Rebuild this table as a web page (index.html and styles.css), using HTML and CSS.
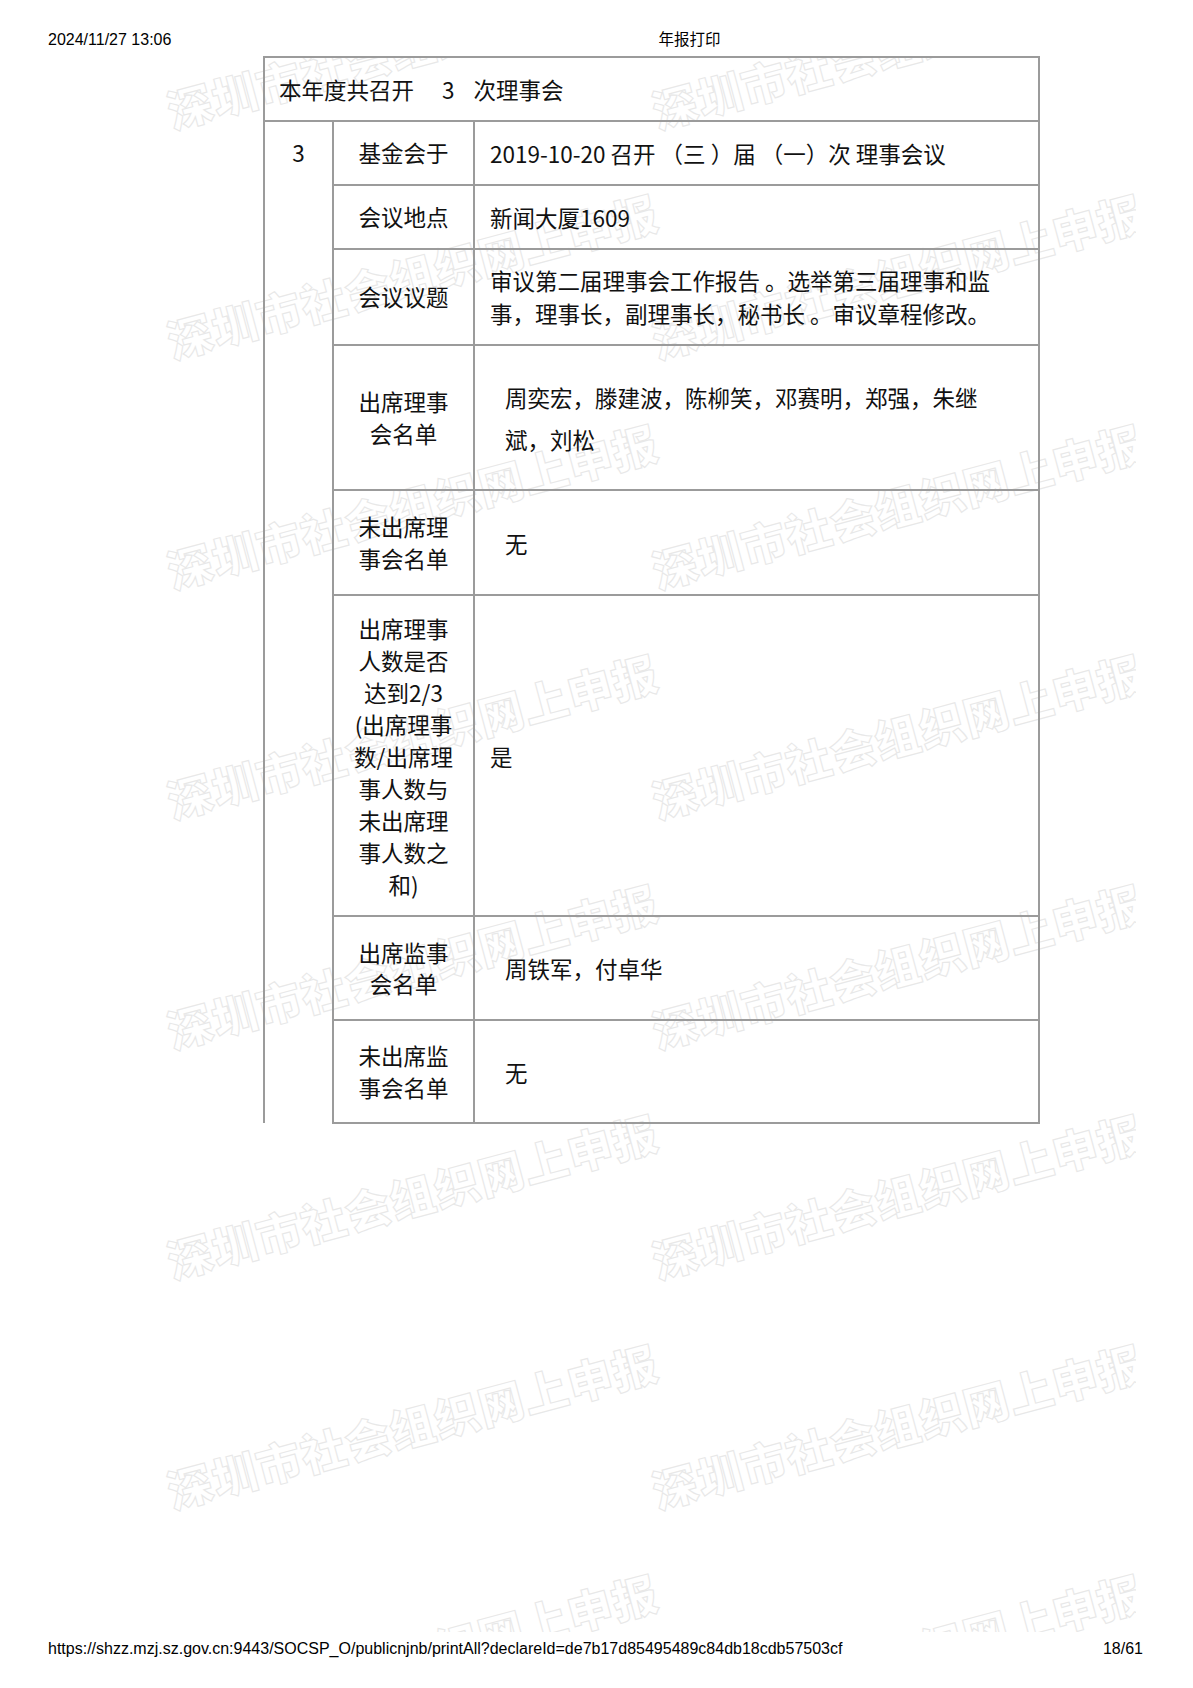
FILE: index.html
```html
<!DOCTYPE html>
<html lang="zh-CN">
<head>
<meta charset="utf-8">
<title>年报打印</title>
<link rel="stylesheet" href="styles.css">
</head>
<body>
<div class="page">
  <div class="watermarks" aria-hidden="true">
    <span class="wm c1 r0">深圳市社会组织网上申报</span>
    <span class="wm c2 r0">深圳市社会组织网上申报</span>
    <span class="wm c1 r1">深圳市社会组织网上申报</span>
    <span class="wm c2 r1">深圳市社会组织网上申报</span>
    <span class="wm c1 r2">深圳市社会组织网上申报</span>
    <span class="wm c2 r2">深圳市社会组织网上申报</span>
    <span class="wm c1 r3">深圳市社会组织网上申报</span>
    <span class="wm c2 r3">深圳市社会组织网上申报</span>
    <span class="wm c1 r4">深圳市社会组织网上申报</span>
    <span class="wm c2 r4">深圳市社会组织网上申报</span>
    <span class="wm c1 r5">深圳市社会组织网上申报</span>
    <span class="wm c2 r5">深圳市社会组织网上申报</span>
    <span class="wm c1 r6">深圳市社会组织网上申报</span>
    <span class="wm c2 r6">深圳市社会组织网上申报</span>
    <span class="wm c1 r7">深圳市社会组织网上申报</span>
    <span class="wm c2 r7">深圳市社会组织网上申报</span>
  </div>

  <header class="print-header">
    <span class="date">2024/11/27 13:06</span>
    <span class="doc-title">年报打印</span>
  </header>

  <main class="content">
    <table class="report">
      <colgroup>
        <col class="col-idx">
        <col class="col-label">
        <col class="col-value">
      </colgroup>
      <tr class="h-64">
        <td colspan="3" class="summary">本年度共召开<span class="count">3</span>次理事会</td>
      </tr>
      <tr class="h-64">
        <td rowspan="8" class="idx">3</td>
        <td class="label">基金会于</td>
        <td class="value">2019-10-20 召开 （三 ）届 （一）次 理事会议</td>
      </tr>
      <tr class="h-64">
        <td class="label">会议地点</td>
        <td class="value">新闻大厦1609</td>
      </tr>
      <tr class="h-96">
        <td class="label">会议议题</td>
        <td class="value topic">审议第二届理事会工作报告 。选举第三届理事和监事，理事长，副理事长，秘书长 。审议章程修改。</td>
      </tr>
      <tr class="h-145">
        <td class="label">出席理事会名单</td>
        <td class="value names">周奕宏，滕建波，陈柳笑，邓赛明，郑强，朱继斌，刘松</td>
      </tr>
      <tr class="h-105">
        <td class="label">未出席理事会名单</td>
        <td class="value indent">无</td>
      </tr>
      <tr class="h-321">
        <td class="label long">出席理事<br>人数是否<br>达到2/3<br>(出席理事<br>数/出席理<br>事人数与<br>未出席理<br>事人数之<br>和)</td>
        <td class="value">是</td>
      </tr>
      <tr class="h-104">
        <td class="label">出席监事会名单</td>
        <td class="value indent">周铁军，付卓华</td>
      </tr>
      <tr class="h-103">
        <td class="label">未出席监事会名单</td>
        <td class="value indent">无</td>
      </tr>
    </table>
  </main>

  <footer class="print-footer">
    <span class="url">https://shzz.mzj.sz.gov.cn:9443/SOCSP_O/publicnjnb/printAll?declareId=de7b17d85495489c84db18cdb57503cf</span>
    <span class="pager">18/61</span>
  </footer>
</div>
</body>
</html>
```

FILE: styles.css
```css
* { box-sizing: border-box; }

html, body {
  margin: 0;
  padding: 0;
  background: #fff;
}

.page {
  position: relative;
  width: 1193px;
  height: 1688px;
  display: flex;
  flex-direction: column;
  overflow: hidden;
  color: #000;
}

/* ---------- watermark layer ---------- */
.watermarks {
  position: absolute;
  left: 0;
  top: 57px;
  width: 1136px;
  height: 1575px;
  overflow: hidden;
  pointer-events: none;
  z-index: 0;
}

.wm {
  position: absolute;
  white-space: nowrap;
  font-family: "Noto Sans CJK SC", sans-serif;
  font-weight: 900;
  font-size: 45px;
  line-height: 1;
  letter-spacing: 1px;
  color: #fff;
  -webkit-text-stroke: 1.1px #e8e8e8;
  transform: translate(-50%, -50%) rotate(-15deg);
}

.c1 { left: 412px; }
.c2 { left: 897px; }
.r0 { top: -12px; }
.r1 { top: 218px; }
.r2 { top: 448px; }
.r3 { top: 678px; }
.r4 { top: 908px; }
.r5 { top: 1138px; }
.r6 { top: 1368px; }
.r7 { top: 1598px; }

/* ---------- print header / footer ---------- */
.print-header,
.print-footer {
  position: relative;
  z-index: 1;
  display: flex;
  align-items: center;
  font-family: "Liberation Sans", "Noto Sans CJK SC", sans-serif;
  font-size: 16px;
  line-height: 18px;
  padding: 0 50px 0 48px;
}

.print-header {
  padding-top: 31px;
}

.doc-title {
  margin-left: 487px;
  font-size: 15.5px;
}

.print-footer {
  margin-top: auto;
  justify-content: space-between;
  padding-bottom: 30px;
}

/* ---------- report table ---------- */
.content {
  position: relative;
  z-index: 1;
  padding-top: 7px;
}

.report {
  margin-left: 263px;
  width: 775px;
  border-collapse: collapse;
  table-layout: fixed;
  font-family: "Noto Sans CJK SC", "Microsoft YaHei", sans-serif;
  font-size: 22.5px;
  color: #111;
}

.col-idx { width: 69px; }
.col-label { width: 141px; }
.col-value { width: 565px; }

.report td {
  border: 2px solid #9b9b9b;
  vertical-align: middle;
  line-height: 32px;
  padding: 0;
}

.h-64 { height: 64px; }
.h-96 { height: 96px; }
.h-145 { height: 145px; }
.h-105 { height: 105px; }
.h-321 { height: 321px; }
.h-104 { height: 104px; }
.h-103 { height: 103px; }

.summary {
  padding-left: 14px !important;
}

.count {
  display: inline-block;
  margin: 0 19px 0 28px;
}

.idx {
  text-align: center;
  vertical-align: top !important;
  padding-top: 14px !important;
  border-bottom: none !important;
}

.label {
  text-align: center;
  line-height: 31.5px !important;
  padding: 0 10px !important;
}

.label:not(.long) {
  padding: 0 19px !important;
}

.long {
  line-height: 32px !important;
}

.value {
  text-align: left;
  padding: 0 42px 0 15px !important;
}

.topic {
  line-height: 33px !important;
}

.names {
  line-height: 42px !important;
  padding-left: 30px !important;
}

.indent {
  padding-left: 30px !important;
}
```
